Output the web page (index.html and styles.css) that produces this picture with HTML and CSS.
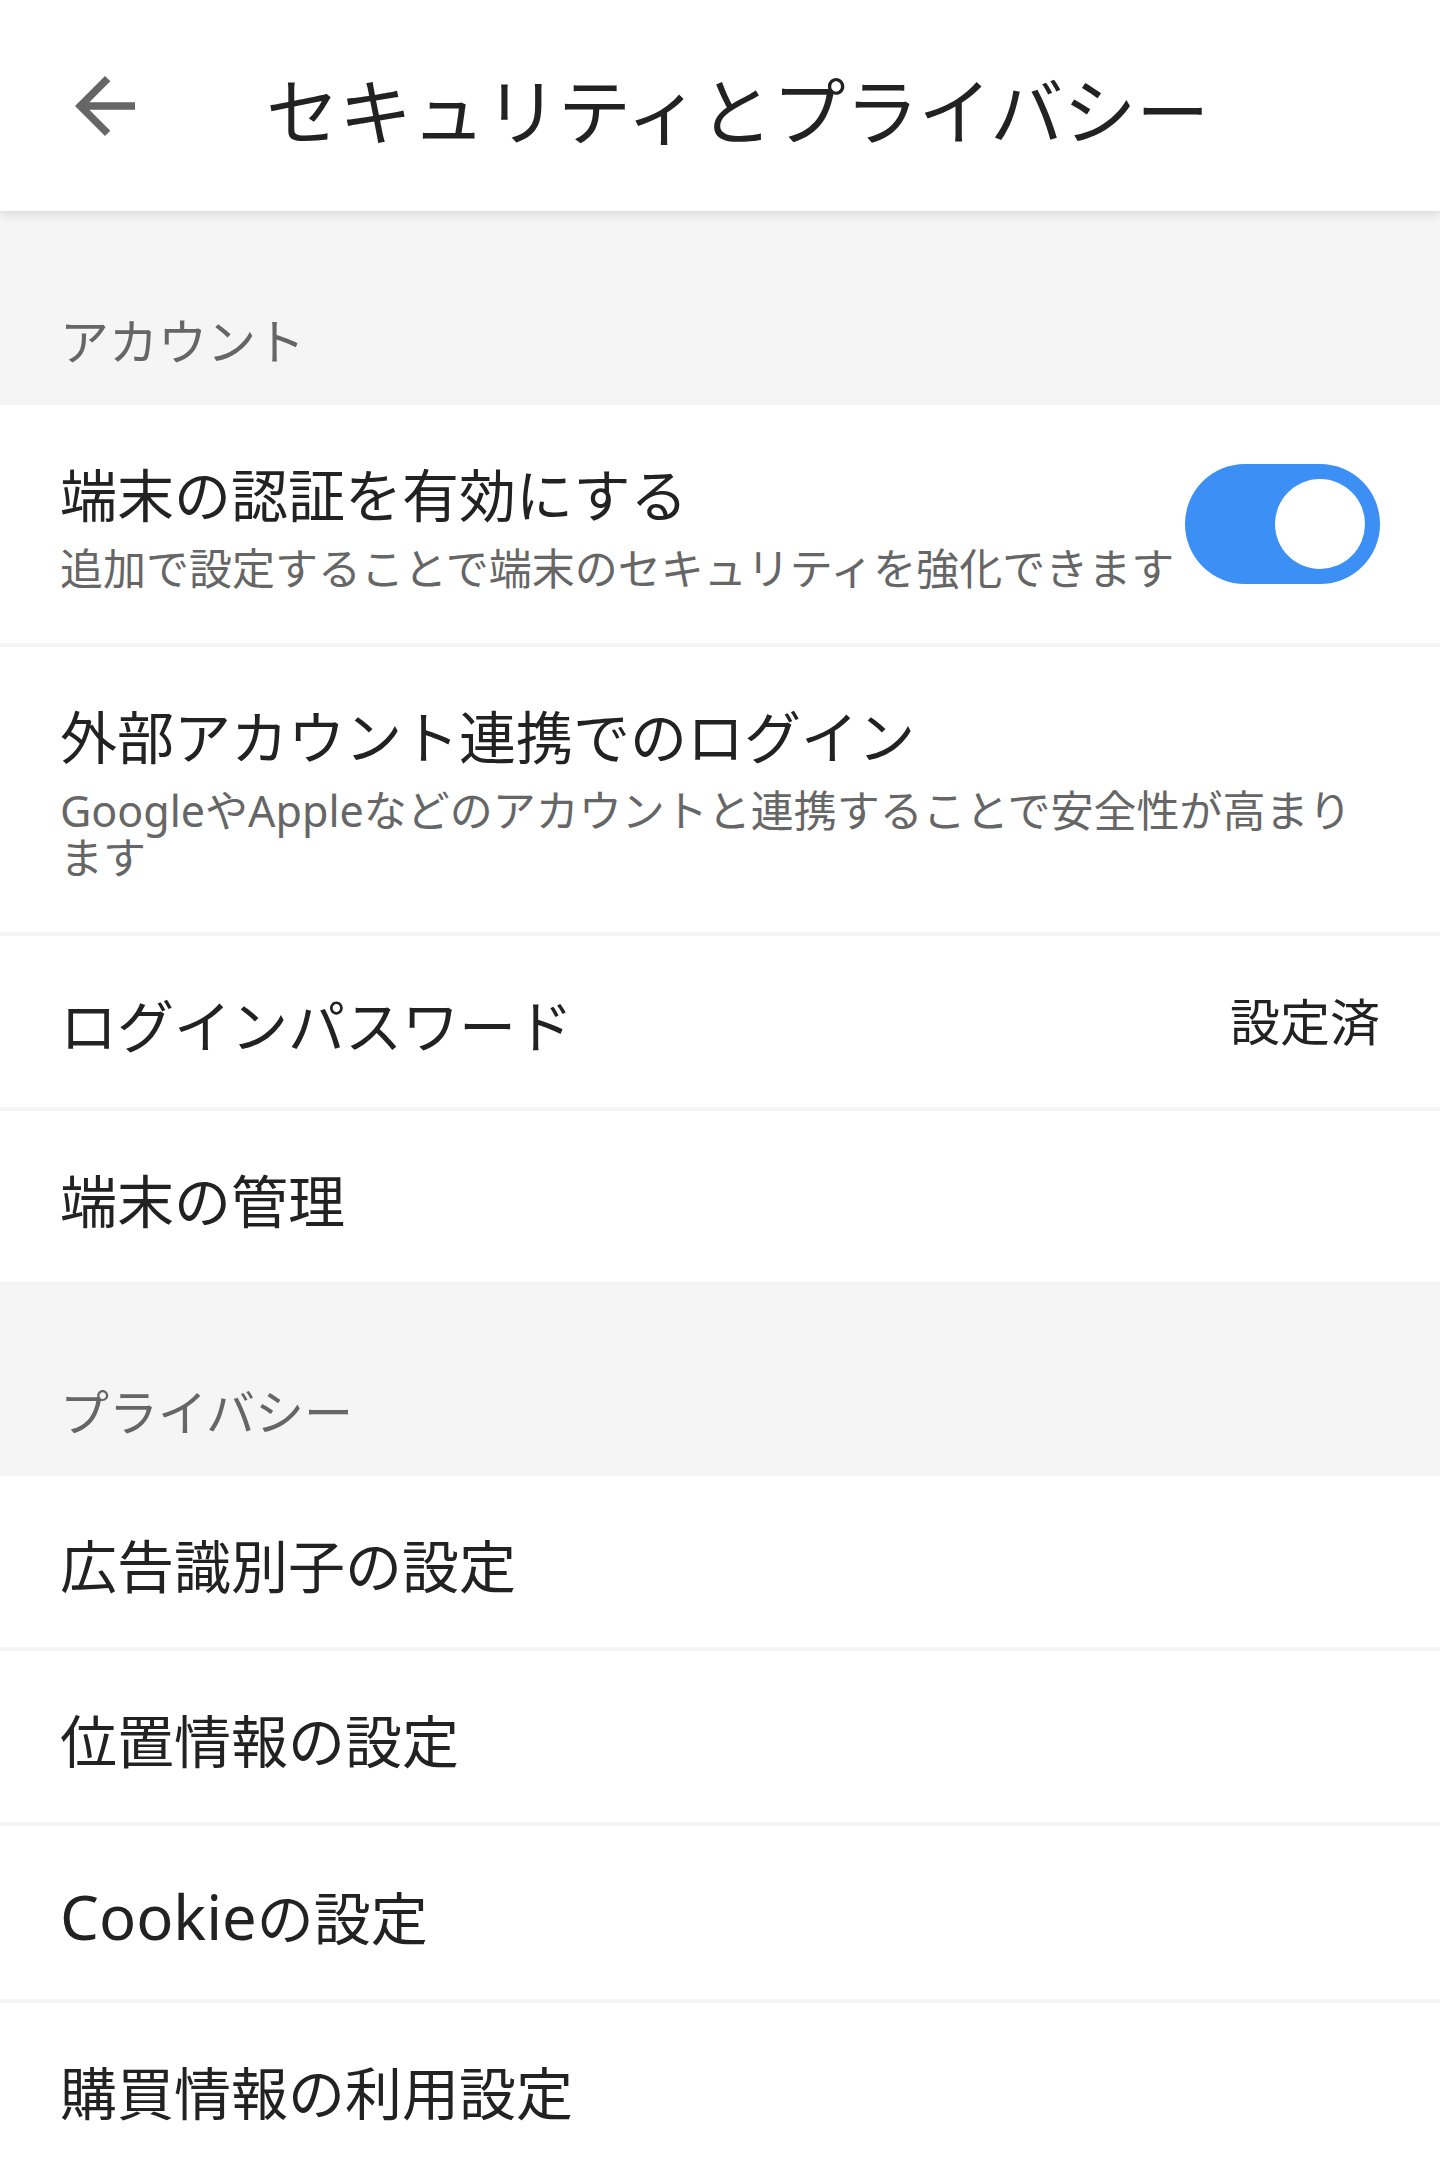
FILE: index.html
```html
<!DOCTYPE html>
<html lang="ja">
<head>
    <meta charset="UTF-8">
    <meta name="viewport" content="width=device-width, initial-scale=1.0">
    <title>セキュリティとプライバシー</title>
    <link rel="stylesheet" href="styles.css">
</head>
<body>
    <header class="app-bar">
        <button class="back-btn" aria-label="戻る">
            <svg viewBox="0 0 24 24" width="90" height="90">
                <path d="M20 11H7.83l5.59-5.59L12 4l-8 8 8 8 1.41-1.41L7.83 13H20v-2z" fill="#666666"/>
            </svg>
        </button>
        <h1 class="app-title">セキュリティとプライバシー</h1>
    </header>

    <main>
        <div class="section-label">アカウント</div>
        <ul class="setting-list">
            <li class="setting-item">
                <div class="item-text">
                    <div class="item-title">端末の認証を有効にする</div>
                    <div class="item-sub">追加で設定することで端末のセキュリティを強化できます</div>
                </div>
                <span class="switch is-on"><span class="switch-knob"></span></span>
            </li>
            <li class="setting-item">
                <div class="item-text">
                    <div class="item-title">外部アカウント連携でのログイン</div>
                    <div class="item-sub">GoogleやAppleなどのアカウントと連携することで安全性が高まります</div>
                </div>
            </li>
            <li class="setting-item">
                <div class="item-text">
                    <div class="item-title">ログインパスワード</div>
                </div>
                <span class="item-value">設定済</span>
            </li>
            <li class="setting-item">
                <div class="item-text">
                    <div class="item-title">端末の管理</div>
                </div>
            </li>
        </ul>

        <div class="section-label">プライバシー</div>
        <ul class="setting-list">
            <li class="setting-item">
                <div class="item-text">
                    <div class="item-title">広告識別子の設定</div>
                </div>
            </li>
            <li class="setting-item">
                <div class="item-text">
                    <div class="item-title">位置情報の設定</div>
                </div>
            </li>
            <li class="setting-item">
                <div class="item-text">
                    <div class="item-title"><span class="latin">Cookie</span>の設定</div>
                </div>
            </li>
            <li class="setting-item">
                <div class="item-text">
                    <div class="item-title">購買情報の利用設定</div>
                </div>
            </li>
        </ul>
    </main>
</body>
</html>
```

FILE: styles.css
```css
body {
    margin: 0;
    background: #ffffff;
    font-family: "Noto Sans", "Noto Sans CJK JP", sans-serif;
    color: #222222;
}
.app-bar {
    position: relative;
    z-index: 1;
    display: flex;
    align-items: center;
    height: 211px;
    padding-left: 60px;
    background: #ffffff;
    box-shadow: 0 3px 10px rgba(0, 0, 0, 0.12);
}
.back-btn {
    display: flex;
    padding: 0;
    border: none;
    background: none;
    cursor: pointer;
}
.app-title {
    margin: 10px 0 0 116px;
    font-size: 73px;
    font-weight: 400;
    line-height: 88px;
    color: #222222;
}
.section-label {
    padding: 96px 60px 30px;
    background: #f5f5f5;
    font-size: 49px;
    line-height: 68px;
    color: #666666;
}
.setting-list {
    margin: 0;
    padding: 0;
    list-style: none;
}
.setting-item {
    display: flex;
    align-items: center;
    padding: 0 60px;
}
.setting-item + .setting-item {
    border-top: 4px solid #f5f5f5;
}
.item-text {
    flex: 1;
    min-width: 0;
    padding: 56px 0 47px;
}
.item-title {
    font-size: 57px;
    line-height: 68px;
    color: #222222;
}
.item-sub {
    margin: 16px 0 4px;
    font-size: 43px;
    line-height: 47px;
    color: #666666;
}
.latin {
    font-size: 1.08em;
}
.item-value {
    font-size: 50px;
    line-height: 68px;
    color: #222222;
}
.switch {
    flex-shrink: 0;
    display: flex;
    align-items: center;
    justify-content: flex-end;
    box-sizing: border-box;
    width: 195px;
    height: 120px;
    margin-left: 6px;
    padding: 15px;
    border-radius: 60px;
    background: #c8c8c8;
}
.switch.is-on {
    background: #3b8ff5;
}
.switch-knob {
    width: 90px;
    height: 90px;
    border-radius: 50%;
    background: #ffffff;
}
```
